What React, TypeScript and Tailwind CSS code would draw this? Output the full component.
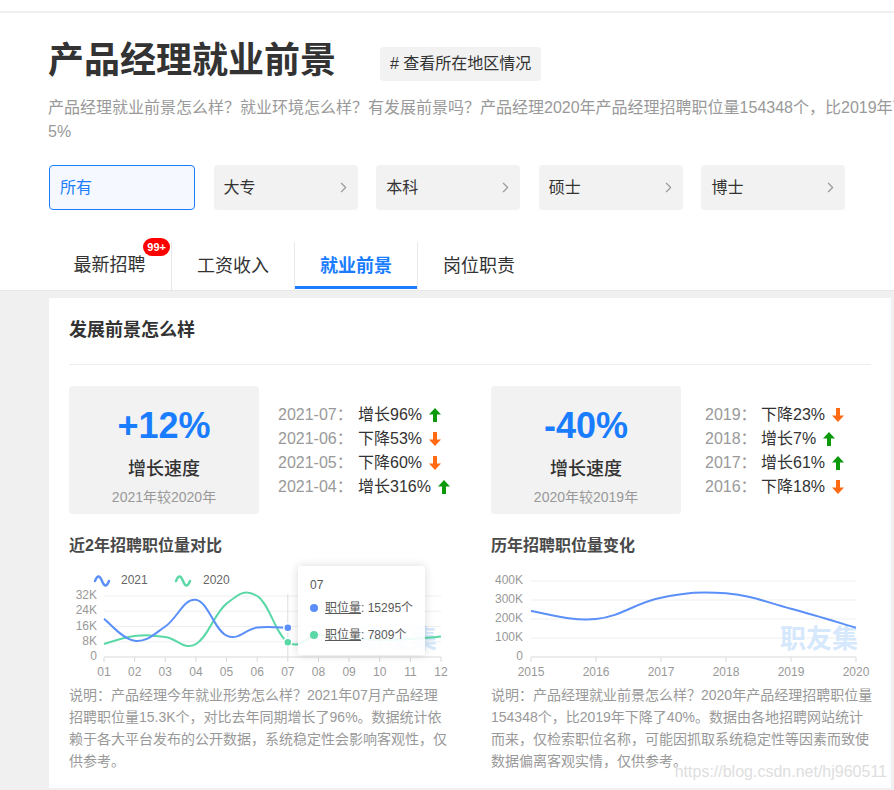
import { ChevronRight } from "lucide-react";

type Row = { label: string; text: string; up: boolean };

const monthRows: Row[] = [
  { label: "2021-07：", text: "增长96%", up: true },
  { label: "2021-06：", text: "下降53%", up: false },
  { label: "2021-05：", text: "下降60%", up: false },
  { label: "2021-04：", text: "增长316%", up: true },
];

const yearRows: Row[] = [
  { label: "2019：", text: "下降23%", up: false },
  { label: "2018：", text: "增长7%", up: true },
  { label: "2017：", text: "增长61%", up: true },
  { label: "2016：", text: "下降18%", up: false },
];

const leftNote = [
  "说明：产品经理今年就业形势怎么样？2021年07月产品经理",
  "招聘职位量15.3K个，对比去年同期增长了96%。数据统计依",
  "赖于各大平台发布的公开数据，系统稳定性会影响客观性，仅",
  "供参考。",
];

const rightNote = [
  "说明：产品经理就业前景怎么样？2020年产品经理招聘职位量",
  "154348个，比2019年下降了40%。数据由各地招聘网站统计",
  "而来，仅检索职位名称，可能因抓取系统稳定性等因素而致使",
  "数据偏离客观实情，仅供参考。",
];

const BLUE = "#5b8ff9";
const GREEN = "#5ad8a6";

// catmull-rom -> bezier, close enough to the echarts smooth line
function smoothPath(pts: number[][]) {
  let d = `M${pts[0][0]},${pts[0][1]}`;
  const s = 0.2;
  for (let i = 0; i < pts.length - 1; i++) {
    const p0 = pts[i - 1] || pts[i];
    const p1 = pts[i];
    const p2 = pts[i + 1];
    const p3 = pts[i + 2] || p2;
    const c1x = p1[0] + (p2[0] - p0[0]) * s;
    const c1y = p1[1] + (p2[1] - p0[1]) * s;
    const c2x = p2[0] - (p3[0] - p1[0]) * s;
    const c2y = p2[1] - (p3[1] - p1[1]) * s;
    d += ` C${c1x},${c1y} ${c2x},${c2y} ${p2[0]},${p2[1]}`;
  }
  return d;
}

function Arrow({ up }: { up: boolean }) {
  return up ? (
    <svg width="12" height="14" viewBox="0 0 12 14">
      <path d="M6 0 L12 6.5 H8 V14 H4 V6.5 H0 Z" fill="#0c9a0c" />
    </svg>
  ) : (
    <svg width="12" height="14" viewBox="0 0 12 14">
      <path d="M6 14 L12 7.5 H8 V0 H4 V7.5 H0 Z" fill="#ff6a13" />
    </svg>
  );
}

function Wave({ x, y, color }: { x: number; y: number; color: string }) {
  return (
    <path
      d={`M${x} ${y} C${x + 2.5} ${y - 6} ${x + 4.5} ${y - 6} ${x + 7} ${y} S${x + 11.5} ${y + 6} ${x + 14} ${y}`}
      stroke={color}
      strokeWidth={2.5}
      fill="none"
      strokeLinecap="round"
    />
  );
}

function StatBlock(props: { value: string; sub: string; rows: Row[]; dateWidth: string; listGap: string }) {
  return (
    <div className="flex items-center">
      <div className="w-[190px] h-[128px] rounded-[4px] bg-[#f2f2f2] flex flex-col items-center">
        <div className="mt-[20px] text-[36px] leading-[40px] font-bold text-[#1a7dff]">{props.value}</div>
        <div className="mt-[11px] text-[18px] leading-[24px] font-medium text-[#333]">增长速度</div>
        <div className="mt-[6px] text-[14px] leading-[20px] text-[#999]">{props.sub}</div>
      </div>
      <div className={`${props.listGap} mt-[2px] flex flex-col`}>
        {props.rows.map((r) => (
          <div key={r.label} className="flex items-center h-[24px] text-[16px]">
            <span className={`${props.dateWidth} text-[#999]`}>{r.label}</span>
            <span className="text-[#333]">{r.text}</span>
            <span className="ml-[7px] flex items-center">
              <Arrow up={r.up} />
            </span>
          </div>
        ))}
      </div>
    </div>
  );
}

function MonthChart() {
  const x0 = 35;
  const step = (372 - 35) / 11;
  const y = (v: number) => 89 - (v / 32) * 61;
  const blue = [20, 8.5, 16, 30, 11.2, 15.5, 15.3];
  const green = [6.8, 11, 10.5, 6.8, 28, 32, 7.8, 11.5, 10, 9, 9.5, 10.7];
  const bp = blue.map((v, i) => [x0 + i * step, y(v)]);
  const gp = green.map((v, i) => [x0 + i * step, y(v)]);
  const months = ["01", "02", "03", "04", "05", "06", "07", "08", "09", "10", "11", "12"];
  const px = x0 + 6 * step;

  return (
    <div className="relative mt-[11px] h-[114px]">
      <svg width={381} height={114} className="block">
        <Wave x={26} y={13} color={BLUE} />
        <text x={52} y={13} fontSize={12} fill="#666" dominantBaseline="middle">2021</text>
        <Wave x={107} y={13} color={GREEN} />
        <text x={134} y={13} fontSize={12} fill="#666" dominantBaseline="middle">2020</text>

        {[0, 8, 16, 24, 32].map((v) => (
          <g key={v}>
            <line x1={x0} x2={372} y1={y(v)} y2={y(v)} stroke={v === 0 ? "#d9d9d9" : "#efefef"} />
            <text x={28} y={y(v)} fontSize={12} fill="#999" textAnchor="end" dominantBaseline="middle">
              {v === 0 ? "0" : `${v}K`}
            </text>
          </g>
        ))}
        {months.map((m, i) => (
          <g key={m}>
            <line x1={x0 + i * step} x2={x0 + i * step} y1={89} y2={94} stroke="#d9d9d9" />
            <text x={x0 + i * step} y={105} fontSize={12} fill="#999" textAnchor="middle" dominantBaseline="middle">
              {m}
            </text>
          </g>
        ))}
        <text x={368} y={80} fontSize={26} fontWeight={700} fill="#d6e8fc" textAnchor="end">职友集</text>
        <line x1={px} x2={px} y1={26} y2={89} stroke="#ddd" />
        <path d={smoothPath(gp)} stroke={GREEN} strokeWidth={2} fill="none" />
        <path d={smoothPath(bp)} stroke={BLUE} strokeWidth={2} fill="none" />
        <circle cx={px} cy={y(15.3)} r={4} fill={BLUE} stroke="#fff" strokeWidth={1.5} />
        <circle cx={px} cy={y(7.8)} r={4} fill={GREEN} stroke="#fff" strokeWidth={1.5} />
      </svg>

      <div className="absolute left-[229px] top-[-2px] w-[127px] h-[89px] rounded-[3px] bg-white/90 shadow-[0_0_10px_rgba(0,0,0,0.15)] pl-[12px] text-[12px] text-[#595959] whitespace-nowrap">
        <div className="mt-[10px] leading-[18px]">07</div>
        <div className="mt-[5px] flex items-center leading-[18px]">
          <span className="shrink-0 w-[8px] h-[8px] rounded-full bg-[#5b8ff9] mr-[7px]" />
          <span>
            <span className="underline">职位量</span>: 15295个
          </span>
        </div>
        <div className="mt-[9px] flex items-center leading-[18px]">
          <span className="shrink-0 w-[8px] h-[8px] rounded-full bg-[#5ad8a6] mr-[7px]" />
          <span>
            <span className="underline">职位量</span>: 7809个
          </span>
        </div>
      </div>
    </div>
  );
}

function YearChart() {
  const x0 = 40;
  const step = 65;
  const y = (v: number) => 89 - (v / 400) * 76;
  const data = [242, 200, 312, 335, 254, 154];
  const pts = data.map((v, i) => [x0 + i * step, y(v)]);
  const years = ["2015", "2016", "2017", "2018", "2019", "2020"];

  return (
    <div className="mt-[11px] h-[114px]">
      <svg width={381} height={114} className="block">
        {[0, 100, 200, 300, 400].map((v) => (
          <g key={v}>
            <line x1={x0} x2={365} y1={y(v)} y2={y(v)} stroke={v === 0 ? "#d9d9d9" : "#efefef"} />
            <text x={32} y={y(v)} fontSize={12} fill="#999" textAnchor="end" dominantBaseline="middle">
              {v === 0 ? "0" : `${v}K`}
            </text>
          </g>
        ))}
        {years.map((m, i) => (
          <g key={m}>
            <line x1={x0 + i * step} x2={x0 + i * step} y1={89} y2={94} stroke="#d9d9d9" />
            <text x={x0 + i * step} y={105} fontSize={12} fill="#999" textAnchor="middle" dominantBaseline="middle">
              {m}
            </text>
          </g>
        ))}
        <text x={367} y={80} fontSize={26} fontWeight={700} fill="#d6e8fc" textAnchor="end">职友集</text>
        <path d={smoothPath(pts)} stroke={BLUE} strokeWidth={2} fill="none" />
      </svg>
    </div>
  );
}

function Note({ lines }: { lines: string[] }) {
  return (
    <div className="mt-[2px] text-[14px] leading-[22px] text-[#999]">
      {lines.map((l) => (
        <div key={l} className="whitespace-nowrap">{l}</div>
      ))}
    </div>
  );
}

export default function App() {
  const levels = ["大专", "本科", "硕士", "博士"];
  const tabs = ["最新招聘", "工资收入", "就业前景", "岗位职责"];

  return (
    <div className="w-[894px] min-h-[790px] overflow-hidden bg-white font-['Liberation_Sans','Noto_Sans_CJK_SC',sans-serif]">
      <div className="h-[13px] border-b-2 border-[#f0f0f0]" />

      {/* header */}
      <div className="pl-[48px]">
        <div className="mt-[28px] flex items-center">
          <h1 className="text-[36px] leading-[40px] font-bold text-[#333]">产品经理就业前景</h1>
          <div className="ml-[44px] mt-[6px] h-[34px] px-[10px] flex items-center rounded-[4px] bg-[#f2f2f2] text-[16px] text-[#333]">
            # 查看所在地区情况
          </div>
        </div>
        <div className="mt-[15px] w-[846px] overflow-hidden text-[16px] leading-[24px] text-[#999]">
          <div className="whitespace-nowrap">
            产品经理就业前景怎么样？就业环境怎么样？有发展前景吗？产品经理2020年产品经理招聘职位量154348个，比2019年下降了4
          </div>
          <div>5%</div>
        </div>

        <div className="mt-[21px] flex gap-[18.6px] pl-[1px]">
          <div className="w-[146px] h-[45px] rounded-[4px] border border-[#1a7dff] bg-[#f5f9ff] flex items-center pl-[10px] text-[16px] text-[#1a7dff]">
            所有
          </div>
          {levels.map((l) => (
            <div key={l} className="w-[144px] h-[45px] rounded-[4px] bg-[#f2f2f2] flex items-center justify-between pl-[10px] pr-[6px] text-[16px] text-[#333]">
              {l}
              <ChevronRight size={17} strokeWidth={1.6} color="#999" />
            </div>
          ))}
        </div>

        <div className="mt-[30px] flex h-[50px]">
          {tabs.map((t, i) => (
            <div
              key={t}
              className={`relative w-[123px] flex items-center justify-center text-[18px] ${
                i > 0 ? "border-l border-[#e8e8e8] mt-[2px]" : ""
              } ${i === 2 ? "text-[#1a7dff] font-bold" : "text-[#333]"}`}
            >
              {t}
              {i === 0 && (
                <span className="absolute right-[1px] top-[-2px] h-[18px] px-[4px] rounded-full bg-[#ff0000] text-white text-[11px] font-bold leading-[18px]">
                  99+
                </span>
              )}
              {i === 2 && <span className="absolute left-0 right-0 bottom-[1px] h-[3px] bg-[#1a7dff]" />}
            </div>
          ))}
        </div>
      </div>

      {/* body */}
      <div className="border-t border-[#e8e8e8] bg-[#f0f0f0] pt-[7px] pb-[3px]">
        <div className="relative ml-[49px] w-[842px] bg-white px-[20px] pt-[19px] pb-[16px]">
          <h2 className="text-[18px] leading-[26px] font-bold text-[#333]">发展前景怎么样</h2>
          <div className="mt-[21px] border-t border-[#eee]" />

          <div className="mt-[21px] flex">
            <div className="w-[381px]">
              <StatBlock value="+12%" sub="2021年较2020年" rows={monthRows} dateWidth="w-[80px]" listGap="ml-[19px]" />
              <h3 className="mt-[21px] text-[16px] leading-[22px] font-bold text-[#4a4a4a]">近2年招聘职位量对比</h3>
              <MonthChart />
              <Note lines={leftNote} />
            </div>
            <div className="mx-[20px] w-px bg-[#eee]" />
            <div className="w-[381px] pl-[1px]">
              <StatBlock value="-40%" sub="2020年较2019年" rows={yearRows} dateWidth="w-[56px]" listGap="ml-[24px]" />
              <h3 className="mt-[21px] text-[16px] leading-[22px] font-bold text-[#4a4a4a]">历年招聘职位量变化</h3>
              <YearChart />
              <Note lines={rightNote} />
            </div>
          </div>

          <div className="absolute right-[4px] bottom-[7px] text-[16px] leading-[18px] text-[#dedede]">
            https://blog.csdn.net/hj960511
          </div>
        </div>
      </div>
    </div>
  );
}
